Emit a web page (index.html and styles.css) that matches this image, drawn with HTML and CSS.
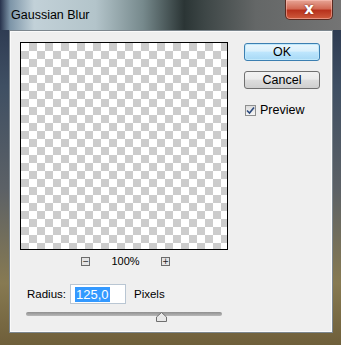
FILE: index.html
```html
<!DOCTYPE html>
<html>
<head>
    <title>Gaussian Blur</title>
    <link rel="stylesheet" href="styles.css">
</head>
<body>
    <div class="window">
        <div class="titlebar">
            <span class="title">Gaussian Blur</span>
            <button class="close-button">x</button>
        </div>
        <div class="client">
            <div class="main">
                <div class="preview"></div>
                <div class="zoom-row">
                    <span class="zoom-btn">&minus;</span>
                    <span class="zoom-value">100%</span>
                    <span class="zoom-btn">+</span>
                </div>
                <div class="radius-row">
                    <label for="radius">Radius:</label>
                    <div class="radius-input"><span class="selected">125,0</span></div>
                    <span class="unit">Pixels</span>
                </div>
                <div class="slider">
                    <div class="track"></div>
                    <svg class="thumb" width="11" height="10" viewBox="0 0 11 10">
                        <path d="M0.5 9.5 L0.5 5 L5.5 0.5 L10.5 5 L10.5 9.5 Z" fill="#e8e8e8" stroke="#6f6f6f"/>
                    </svg>
                </div>
            </div>
            <div class="side">
                <button class="btn btn-default">OK</button>
                <button class="btn">Cancel</button>
                <div class="check-row">
                    <span class="checkbox">
                        <svg width="9" height="9" viewBox="0 0 9 9">
                            <path d="M1 4.5 L3.5 7 L8 1.5" fill="none" stroke="#2c4a7e" stroke-width="1.6"/>
                        </svg>
                    </span>
                    <span>Preview</span>
                </div>
            </div>
        </div>
    </div>
</body>
</html>
```

FILE: styles.css
```css
body {
    margin: 0;
    width: 341px;
    height: 345px;
    overflow: hidden;
    font-family: "Liberation Sans", Arial, sans-serif;
    font-size: 12px;
    color: #000;
}
.window {
    width: 341px;
    height: 345px;
    box-sizing: border-box;
    padding: 0 8px 12px 9px;
    display: flex;
    flex-direction: column;
    background: linear-gradient(to bottom, #26324a 0%, #3f4f63 25%, #5c6166 55%, #877a52 82%, #6f5f3a 100%);
}
.titlebar {
    height: 30px;
    margin: 0 -8px 0 -9px;
    padding: 0 8px 0 11px;
    display: flex;
    justify-content: space-between;
    align-items: flex-start;
    background: linear-gradient(to right, #27324c 0, #7d95a8 3%, #c2d1d8 10%, #b3c4ca 28%, #76898c 42%, #2b3535 54%, #3d4646 60%, #646767 75%, #747474 100%);
}
.title {
    margin-top: 8px;
    font-size: 12.5px;
    color: #000;
}
.close-button {
    width: 48px;
    height: 20px;
    padding: 0;
    border: 1px solid #5a2a20;
    border-top: none;
    border-radius: 0 0 5px 5px;
    background: linear-gradient(to bottom, #e7a596 0%, #d26a55 45%, #b8321d 55%, #cf5b3d 100%);
    box-shadow: inset 0 0 0 1px rgba(255, 200, 190, 0.5);
    color: #fff;
    font-family: "DejaVu Sans", sans-serif;
    font-weight: bold;
    font-size: 15px;
    line-height: 17px;
    text-shadow: 0 0 2px #6a1a10;
}
.client {
    flex: 1;
    display: flex;
    background-color: #efefef;
    border: 1px solid #7c868e;
    box-shadow: inset 0 0 0 1px #fafafa;
}
.main {
    width: 234px;
    box-sizing: border-box;
    padding: 11px 0 0 10px;
}
.preview {
    width: 206px;
    height: 206px;
    border: 1px solid #000;
    background-color: #fff;
    background-image: conic-gradient(#cccccc 25%, #ffffff 0 50%, #cccccc 0 75%, #ffffff 0);
    background-size: 16px 16px;
}
.zoom-row {
    display: flex;
    align-items: center;
    height: 10px;
    margin-top: 6px;
    padding-left: 61px;
}
.zoom-btn {
    width: 7px;
    height: 7px;
    border: 1px solid #6c6c6c;
    background: #e4e4e4;
    font-family: "DejaVu Sans", sans-serif;
    font-size: 8px;
    line-height: 7px;
    text-align: center;
    color: #222;
}
.zoom-value {
    width: 71px;
    text-align: center;
    font-size: 11px;
}
.radius-row {
    display: flex;
    align-items: center;
    margin-top: 18px;
    padding-left: 7px;
    font-size: 11.5px;
}
.radius-input {
    width: 50px;
    height: 18px;
    margin-left: 4px;
    border: 1px solid #b9c6d3;
    background-color: #fff;
    display: flex;
    align-items: center;
    padding-left: 4px;
}
.selected {
    background-color: #3399ff;
    color: #fff;
    font-size: 13px;
    line-height: 15px;
    padding: 0 1px;
}
.unit {
    margin-left: 8px;
}
.slider {
    position: relative;
    height: 10px;
    margin-top: 8px;
    margin-left: 6px;
    width: 196px;
}
.track {
    margin-top: 4px;
    height: 4px;
    border-radius: 2px;
    background: linear-gradient(to bottom, #8f8f8f, #b8b8b8);
}
.thumb {
    position: absolute;
    left: 130px;
    top: 0;
}
.side {
    display: flex;
    flex-direction: column;
    padding-top: 12px;
}
.btn {
    width: 76px;
    height: 18px;
    margin-bottom: 10px;
    padding: 0;
    border: 1px solid #707070;
    border-radius: 3px;
    background: linear-gradient(to bottom, #f2f2f2 0%, #ebebeb 45%, #dddddd 50%, #cfcfcf 100%);
    font-family: "Liberation Sans", Arial, sans-serif;
    font-size: 12.5px;
    color: #000;
}
.btn-default {
    border-color: #3c7fb1;
    background: linear-gradient(to bottom, #eaf6fd 0%, #d9f0fc 45%, #bee6fd 50%, #a7d9f5 100%);
    box-shadow: inset 0 0 0 1px #c0e8fb;
}
.check-row {
    display: flex;
    align-items: center;
    margin-top: 4px;
    margin-left: 1px;
    font-size: 12.5px;
}
.checkbox {
    width: 11px;
    height: 11px;
    box-sizing: border-box;
    border: 1px solid #8e8f8f;
    background: linear-gradient(to bottom, #dcdcdc, #f6f6f6);
    display: flex;
    align-items: center;
    justify-content: center;
    margin-right: 4px;
}
```
